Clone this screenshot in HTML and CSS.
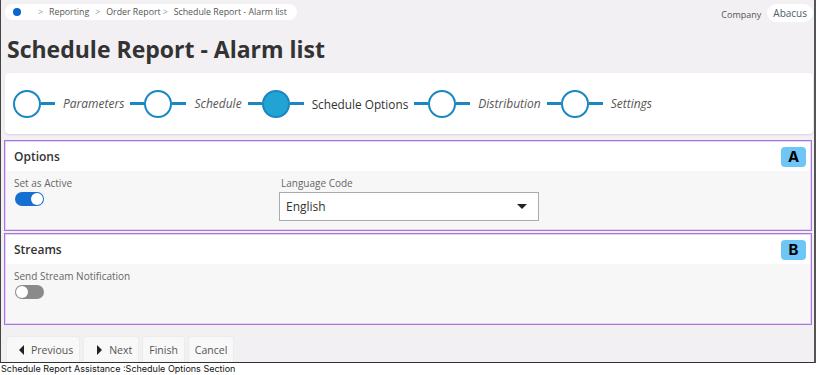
FILE: index.html
```html
<!DOCTYPE html>
<html lang="en">
<head>
    <meta charset="UTF-8">
    <title>Schedule Report - Alarm list</title>
    <link rel="stylesheet" href="styles.css">
</head>
<body>
    <div class="frame">
        <div class="topbar">
            <div class="crumbs">
                <span class="home-dot"></span>
                <span class="chev">&gt;</span>
                <span>Reporting</span>
                <span class="chev">&gt;</span>
                <span>Order Report</span>
                <span class="chev">&gt;</span>
                <span>Schedule Report - Alarm list</span>
            </div>
            <div class="account">
                <span class="company">Company</span>
                <span class="user">Abacus</span>
            </div>
        </div>

        <h1 class="page-title">Schedule Report - Alarm list</h1>

        <div class="stepper">
            <div class="step first">
                <span class="circle"></span><span class="line"></span>
                <span class="label">Parameters</span>
            </div>
            <div class="step">
                <span class="line"></span><span class="circle"></span><span class="line"></span>
                <span class="label">Schedule</span>
            </div>
            <div class="step current">
                <span class="line"></span><span class="circle"></span><span class="line"></span>
                <span class="label">Schedule Options</span>
            </div>
            <div class="step">
                <span class="line"></span><span class="circle"></span><span class="line"></span>
                <span class="label">Distribution</span>
            </div>
            <div class="step">
                <span class="line"></span><span class="circle"></span><span class="line"></span>
                <span class="label">Settings</span>
            </div>
        </div>

        <section class="panel">
            <div class="panel-head">
                <span>Options</span>
                <span class="badge">A</span>
            </div>
            <div class="panel-body">
                <div class="field">
                    <span class="field-label">Set as Active</span>
                    <span class="toggle on"><span class="knob"></span></span>
                </div>
                <div class="field lang">
                    <span class="field-label">Language Code</span>
                    <div class="select">
                        <span>English</span>
                        <span class="caret"></span>
                    </div>
                </div>
            </div>
        </section>

        <section class="panel streams">
            <div class="panel-head">
                <span>Streams</span>
                <span class="badge">B</span>
            </div>
            <div class="panel-body">
                <div class="field">
                    <span class="field-label">Send Stream Notification</span>
                    <span class="toggle"><span class="knob"></span></span>
                </div>
            </div>
        </section>

        <div class="actions">
            <button class="btn"><span class="tri left"></span>Previous</button>
            <button class="btn"><span class="tri right"></span>Next</button>
            <button class="btn">Finish</button>
            <button class="btn">Cancel</button>
        </div>
    </div>
    <p class="caption">Schedule Report Assistance :Schedule Options Section</p>
</body>
</html>
```

FILE: styles.css
```css
body {
    margin: 0;
    background: #fff;
    font-family: "Open Sans", Arial, sans-serif;
    color: #555;
}
.frame {
    width: 813px;
    height: 362px;
    background: #f2f0f3;
    border-left: 1px solid #444;
    border-right: 2px solid #555;
    border-bottom: 1px solid #333;
    overflow: hidden;
}
.topbar {
    display: flex;
    justify-content: space-between;
    height: 24px;
    padding: 4px 1px 0 4px;
    box-sizing: border-box;
}
.crumbs {
    display: flex;
    align-items: center;
    height: 16px;
    padding: 0 10px 0 8px;
    background: #fff;
    border-radius: 8px;
    font-size: 8.8px;
    color: #555;
}
.home-dot {
    width: 8px;
    height: 8px;
    border-radius: 50%;
    background: #0a66cc;
    margin-right: 11px;
}
.chev {
    color: #999;
    margin-right: 6px;
}
.crumbs span + .chev {
    margin-left: 6px;
}
.crumbs span:nth-child(6) {
    margin-left: 2px;
}
.account {
    display: flex;
    align-items: center;
    height: 18px;
    font-size: 9px;
}
.company {
    color: #555;
    margin-right: 6px;
    margin-top: 3px;
}
.user {
    background: #fff;
    border-radius: 9px;
    padding: 0 6px;
    line-height: 18px;
    color: #4d5b69;
    font-size: 10px;
}
.page-title {
    margin: 10px 0 9px 6px;
    font-size: 23px;
    line-height: 30px;
    font-weight: 700;
    color: #333;
}
.stepper {
    display: flex;
    align-items: center;
    height: 61px;
    margin: 0 1px 0 4px;
    padding-left: 8px;
    background: #fff;
    border-radius: 4px;
    box-shadow: 0 1px 2px rgba(0, 0, 0, 0.12);
}
.step {
    display: flex;
    align-items: center;
}
.circle {
    width: 28px;
    height: 28px;
    box-sizing: border-box;
    border: 2px solid #1a86c2;
    border-radius: 50%;
    background: #fff;
}
.line {
    width: 14px;
    height: 3px;
    background: #1a86c2;
}
.label {
    margin: 0 6px 0 8px;
    font-size: 12px;
    font-style: italic;
    color: #555;
}
.current .circle {
    background: #21a4d3;
    border-color: #1a86c2;
}
.current .label {
    font-style: normal;
    color: #333;
    font-size: 11.8px;
}
.panel {
    margin: 6px 2px 0 3px;
    border: 1px solid #a874de;
    box-shadow: inset 0 0 0 1px #e4d4f5;
    padding: 1px;
}
.streams {
    margin-top: 2px;
}
.panel-head {
    display: flex;
    justify-content: space-between;
    align-items: center;
    height: 29px;
    padding: 0 4px 0 8px;
    background: #fff;
    font-size: 12px;
    font-weight: 600;
    color: #333;
}
.badge {
    width: 25px;
    height: 20px;
    border-radius: 4px;
    background: #6ec6f6;
    color: #000;
    font-family: "Inter", "Liberation Sans", sans-serif;
    font-size: 15px;
    font-weight: 700;
    text-align: center;
    line-height: 20px;
}
.panel-body {
    display: flex;
    height: 58px;
    padding: 5px 8px 0 8px;
    background: #f7f7f7;
    box-sizing: border-box;
}
.streams .panel-body {
    height: 59px;
}
.field {
    display: flex;
    flex-direction: column;
    align-items: flex-start;
    width: 265px;
}
.field-label {
    font-size: 10px;
    line-height: 15px;
    color: #666;
    margin-bottom: 1px;
}
.toggle {
    position: relative;
    width: 29px;
    height: 14px;
    border-radius: 7px;
    background: #8a8a8a;
    margin-left: 1px;
}
.toggle .knob {
    position: absolute;
    top: 1px;
    left: 1px;
    width: 12px;
    height: 12px;
    border-radius: 50%;
    background: #fff;
}
.toggle.on {
    background: #1670d2;
}
.toggle.on .knob {
    left: 16px;
}
.lang .field-label {
    margin-left: 2px;
}
.select {
    display: flex;
    justify-content: space-between;
    align-items: center;
    width: 260px;
    height: 29px;
    box-sizing: border-box;
    border: 1px solid #aaa;
    background: #fff;
    padding: 0 11px 0 6px;
    font-size: 12px;
    color: #333;
}
.caret {
    width: 0;
    height: 0;
    border-left: 5px solid transparent;
    border-right: 5px solid transparent;
    border-top: 5px solid #222;
}
.actions {
    display: flex;
    gap: 3px;
    margin: 11px 0 0 5px;
}
.btn {
    display: flex;
    align-items: center;
    height: 27px;
    padding: 0 6px;
    border: 1px solid #ececec;
    border-bottom: none;
    border-radius: 3px 3px 0 0;
    background: #f8f8f8;
    font-family: "Open Sans", Arial, sans-serif;
    font-size: 10.5px;
    color: #555;
}
.tri {
    width: 0;
    height: 0;
    border-top: 5px solid transparent;
    border-bottom: 5px solid transparent;
    margin: 0 7px 0 6px;
}
.tri.left {
    border-right: 5px solid #222;
}
.tri.right {
    border-left: 5px solid #222;
    margin-left: 7px;
}
.caption {
    margin: 0;
    padding-left: 1px;
    font-family: "Inter", "Liberation Sans", sans-serif;
    font-size: 9px;
    line-height: 12px;
    color: #111;
}
```
